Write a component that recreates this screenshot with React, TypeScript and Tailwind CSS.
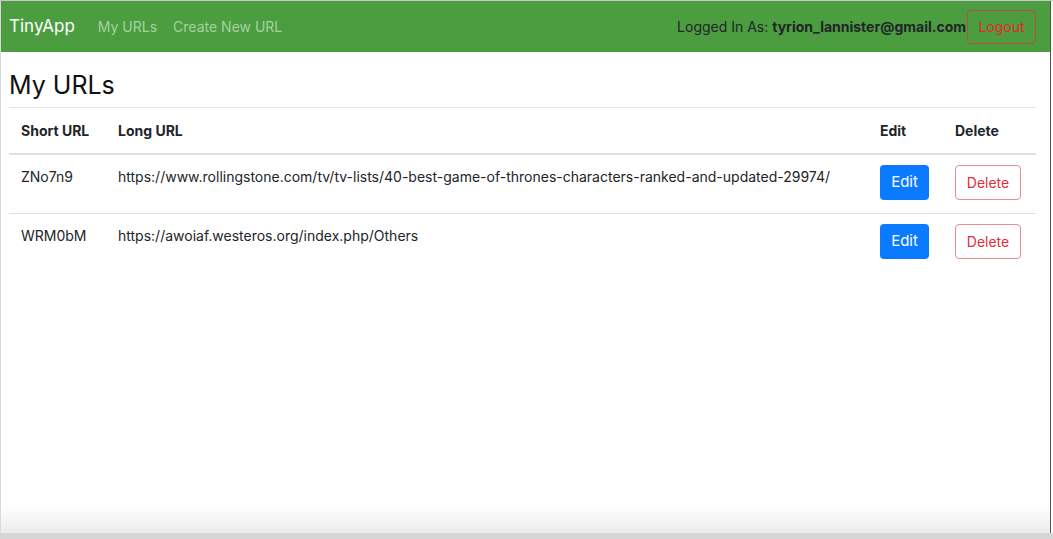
import React from "react";

type UrlRow = {
  short: string;
  long: string;
};

const urls: UrlRow[] = [
  {
    short: "ZNo7n9",
    long: "https://www.rollingstone.com/tv/tv-lists/40-best-game-of-thrones-characters-ranked-and-updated-29974/",
  },
  { short: "WRM0bM", long: "https://awoiaf.westeros.org/index.php/Others" },
];

function Navbar() {
  return (
    <nav className="h-[51px] bg-[#4b9d3f] flex items-center pl-[8px] pr-[14px]">
      <span className="text-white text-[17px] mr-[23px]">TinyApp</span>
      <span className="text-[#a6d19f] text-[14px] mr-[16px]">My URLs</span>
      <span className="text-[#a6d19f] text-[14px]">Create New URL</span>
      <div className="ml-auto flex items-center text-[14px] text-[#212529]">
        <span>
          Logged In As: <b className="font-bold">tyrion_lannister@gmail.com</b>
        </span>
        <button className="ml-px h-[34px] w-[69px] rounded-[4px] border border-[#b5513a] text-[#e8242d]">
          Logout
        </button>
      </div>
    </nav>
  );
}

function UrlTable() {
  return (
    <table className="w-full text-[14px] text-[#212529] border-collapse">
      <thead>
        <tr className="border-b-2 border-[#dee2e6]">
          <th className="text-left font-bold pl-[12px] py-[12px] leading-[21px] w-[97px]">Short URL</th>
          <th className="text-left font-bold pl-[12px] py-[12px] leading-[21px]">Long URL</th>
          <th className="text-left font-bold pl-[12px] py-[12px] leading-[21px] w-[75px]">Edit</th>
          <th className="text-left font-bold pl-[12px] py-[12px] leading-[21px] w-[93px]">Delete</th>
        </tr>
      </thead>
      <tbody>
        {urls.map((u) => (
          <tr key={u.short} className="border-b border-[#dee2e6] last:border-b-0 align-top">
            <td className="pl-[12px] pt-[11px] pb-[12px] leading-[22px]">{u.short}</td>
            <td className="pl-[12px] pt-[11px] pb-[12px] leading-[22px] whitespace-nowrap">{u.long}</td>
            <td className="pl-[12px] pt-[10px] pb-[13px]">
              <button className="h-[35px] w-[49px] rounded-[4px] bg-[#0a7bff] text-white text-[15px]">Edit</button>
            </td>
            <td className="pl-[12px] pt-[10px] pb-[13px]">
              <button className="h-[35px] w-[66px] rounded-[4px] border border-[#e58d93] text-[#dc2f3e]">
                Delete
              </button>
            </td>
          </tr>
        ))}
      </tbody>
    </table>
  );
}

export default function App() {
  return (
    <div
      className="w-[1053px] h-[539px] flex flex-col bg-white overflow-hidden"
      style={{ fontFamily: "Inter, 'Noto Sans', sans-serif" }}
    >
      <div className="h-px bg-[#c8c8c8]" />
      <div className="flex-1 flex min-h-0">
        <div className="w-px bg-[#d9d9d9]" />
        <div className="flex-1 flex flex-col bg-[linear-gradient(to_bottom,#ffffff_0,#ffffff_calc(100%-30px),#ededed_100%)]">
          <Navbar />
          <main className="pl-[8px] pr-[14px]">
            <h3 className="text-[25px] leading-[30px] text-[#111] pt-[18px] pb-[7px] border-b border-[#e6e6e6]">
              My URLs
            </h3>
            <UrlTable />
          </main>
        </div>
        <div className="w-px bg-[#555]" />
        <div className="w-[2px] bg-white" />
      </div>
      <div className="h-[6px] bg-[#d6d6d6]" />
    </div>
  );
}
